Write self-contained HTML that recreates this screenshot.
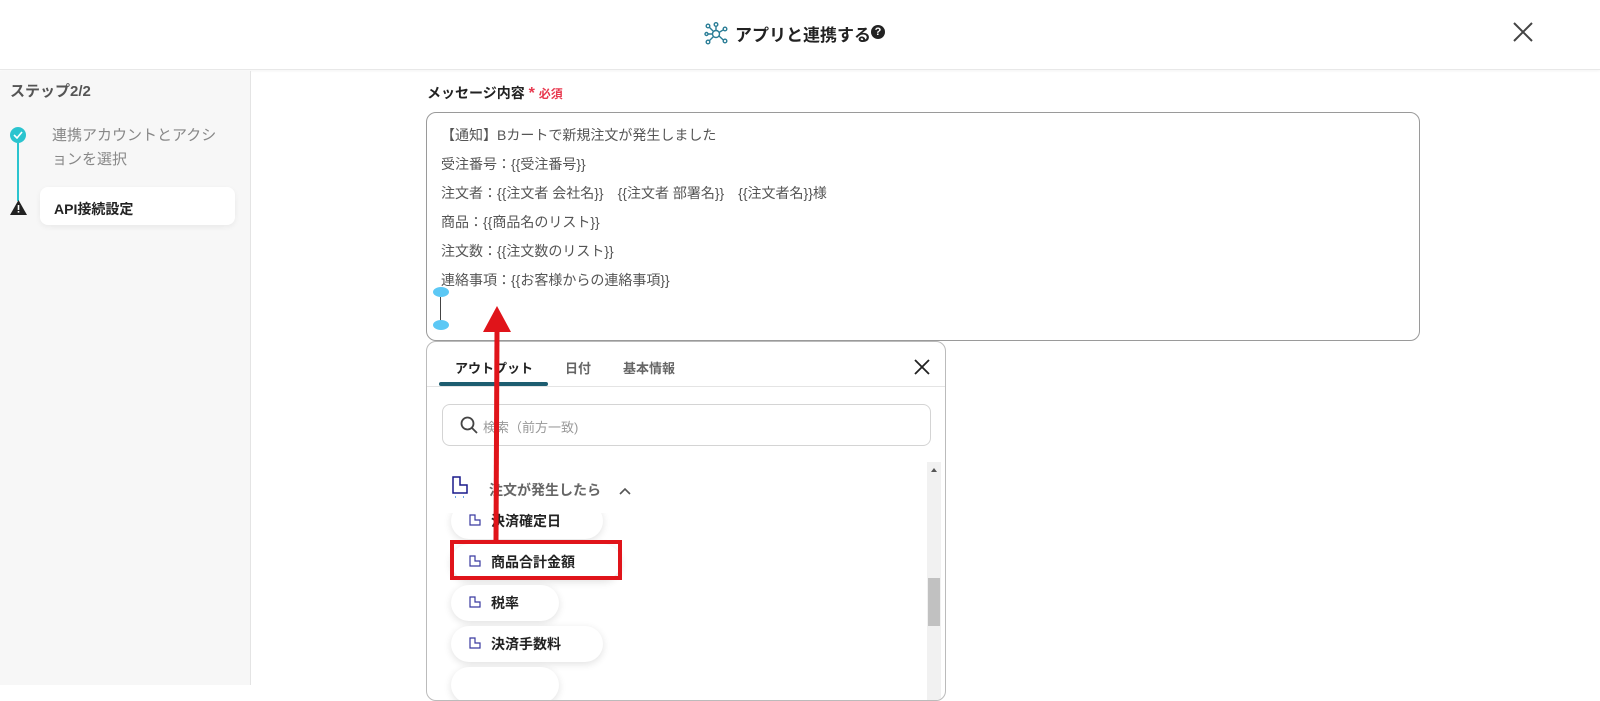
<!DOCTYPE html>
<html><head><meta charset="utf-8"><style>
*{margin:0;padding:0;box-sizing:border-box}
body{width:1600px;height:685px;overflow:hidden;background:#fff;font-family:"Liberation Sans","Noto Sans CJK JP",sans-serif;color:#333;position:relative}
.hdr{position:absolute;left:0;top:0;width:1600px;height:70px;background:#fff;border-bottom:1px solid #e8e8e8;box-shadow:0 1px 3px rgba(0,0,0,.05)}
.side{position:absolute;left:0;top:71px;width:251px;height:614px;background:#f7f7f7;border-right:1px solid #e4e4e4}
.abs{position:absolute}
.ta{position:absolute;left:426px;top:112px;width:994px;height:229px;border:1px solid #9a9a9a;border-radius:10px;background:#fff}
.ta div{position:absolute;left:14px;font-size:14px;color:#555}
.pop{position:absolute;left:426px;top:341px;width:520px;height:360px;border:1px solid #bbb;border-radius:10px;background:#fff;overflow:hidden}
.chip{position:absolute;height:36px;border-radius:18px;background:#fff;box-shadow:0 2px 8px rgba(0,0,0,.12);font-size:14px;font-weight:bold;color:#222;padding-left:40px;line-height:36px}
.ic{position:absolute;left:18px;top:11px;width:12px;height:14px}
</style></head><body>
<div class="hdr">
<svg class="abs" style="left:704px;top:22px" width="24" height="24" viewBox="0 0 24 24" fill="none" stroke="#2a7d96" stroke-width="1.4"><circle cx="12" cy="12" r="3.5"/><circle cx="4" cy="4" r="1.8"/><circle cx="12" cy="2.5" r="1.8"/><circle cx="21" cy="7" r="1.8"/><circle cx="21" cy="19" r="1.8"/><circle cx="4" cy="20" r="1.8"/><circle cx="2.5" cy="12" r="1.5"/><path d="M9.5 9.5L5.3 5.3M12 8.5V4.3M15 10.5L19.3 7.8M15 14L19.3 18M9.5 14.5L5.3 18.7M8.5 12H4"/></svg>
<div class="abs" style="left:735px;top:21px;font-size:17px;font-weight:bold;color:#222">アプリと連携する</div>
<div class="abs" style="left:871px;top:25px;width:14px;height:14px;border-radius:50%;background:#222;color:#fff;font-size:11px;font-weight:bold;text-align:center;line-height:14px">?</div>
<svg class="abs" style="left:1513px;top:22px" width="20" height="20" viewBox="0 0 20 20" stroke="#444" stroke-width="2"><path d="M1 1L19 19M19 1L1 19"/></svg>
</div>
<div class="side">
<div class="abs" style="left:10px;top:9px;font-size:15px;font-weight:bold;color:#555">ステップ2/2</div>
<div class="abs" style="left:10px;top:56px;width:16px;height:16px;border-radius:50%;background:#2bc4cf"></div>
<svg class="abs" style="left:13px;top:60px" width="10" height="8" viewBox="0 0 10 8" fill="none" stroke="#fff" stroke-width="1.6"><path d="M1 4L4 7L9 1"/></svg>
<div class="abs" style="left:17px;top:72px;width:2px;height:58px;background:#2bc4cf"></div>
<svg class="abs" style="left:10px;top:129px" width="17" height="15" viewBox="0 0 17 15"><path d="M8.5 0L17 15H0Z" fill="#222"/><rect x="7.7" y="5" width="1.6" height="5" fill="#fff"/><rect x="7.7" y="11" width="1.6" height="1.6" fill="#fff"/></svg>
<div class="abs" style="left:52px;top:53px;font-size:15px;color:#888;line-height:24px">連携アカウントとアクシ<br>ョンを選択</div>
<div class="abs" style="left:40px;top:116px;width:195px;height:38px;background:#fff;border-radius:8px;box-shadow:0 2px 6px rgba(0,0,0,.06);font-size:14px;font-weight:bold;color:#222;padding:12px 0 0 14px">API接続設定</div>
</div>
<div class="abs" style="left:427px;top:83px;font-size:14px;font-weight:bold;color:#222">メッセージ内容 <span style="color:#e8394f;font-size:16px">*</span> <span style="color:#e8394f;font-size:12px">必須</span></div>
<div class="ta">
<div style="top:12px">【通知】Bカートで新規注文が発生しました</div>
<div style="top:41px">受注番号：{{受注番号}}</div>
<div style="top:70px">注文者：{{注文者 会社名}}　{{注文者 部署名}}　{{注文者名}}様</div>
<div style="top:99px">商品：{{商品名のリスト}}</div>
<div style="top:128px">注文数：{{注文数のリスト}}</div>
<div style="top:157px">連絡事項：{{お客様からの連絡事項}}</div>
<div style="left:6px;top:174px;width:16px;height:10px;border-radius:50%;background:#5cc8f5"></div>
<div style="left:13px;top:184px;width:1px;height:24px;background:#444"></div>
<div style="left:6px;top:207px;width:16px;height:10px;border-radius:50%;background:#5cc8f5"></div>
</div>
<div class="pop">
<div class="abs" style="left:28px;top:16px;font-size:13px;font-weight:bold;color:#222">アウトプット</div>
<div class="abs" style="left:138px;top:16px;font-size:13px;font-weight:bold;color:#666">日付</div>
<div class="abs" style="left:196px;top:16px;font-size:13px;font-weight:bold;color:#666">基本情報</div>
<div class="abs" style="left:12px;top:40px;width:109px;height:4px;background:#1d5d70;border-radius:2px"></div>
<div class="abs" style="left:0;top:44px;width:518px;height:1px;background:#e4e4e4"></div>
<svg class="abs" style="left:487px;top:17px" width="16" height="16" viewBox="0 0 16 16" stroke="#222" stroke-width="1.8"><path d="M1 1L15 15M15 1L1 15"/></svg>
<div class="abs" style="left:15px;top:62px;width:489px;height:42px;border:1px solid #d4d4d4;border-radius:8px"></div>
<svg class="abs" style="left:33px;top:74px" width="18" height="18" viewBox="0 0 18 18" fill="none" stroke="#444" stroke-width="1.8"><circle cx="7.5" cy="7.5" r="6"/><path d="M12 12L17 17"/></svg>
<div class="abs" style="left:56px;top:75px;font-size:13px;color:#999">検索（前方一致)</div>
<div class="abs" style="left:500px;top:120px;width:14px;height:240px;background:#f1f1f1"></div>
<div class="abs" style="left:501px;top:236px;width:12px;height:48px;background:#c1c1c1"></div>
<div class="abs" style="left:504px;top:126px;width:0;height:0;border-left:3px solid transparent;border-right:3px solid transparent;border-bottom:4px solid #555"></div>
<div class="chip" style="left:24px;top:161px;width:152px">決済確定日<svg class="ic" viewBox="0 0 12 14" fill="none" stroke="#3a3aa0" stroke-width="1.2"><path d="M1 1H6V6H11V11H1Z"/></svg></div>
<div class="abs" style="left:0;top:118px;width:240px;height:53px;background:#fff"></div>
<svg class="abs" style="left:24px;top:134px" width="18" height="22" viewBox="0 0 18 22" fill="none" stroke="#1a1a8c" stroke-width="1.5"><path d="M2 1H9V9H16V17H2Z"/><path d="M4 21H5M12 21H13" stroke="#3a8ae0"/></svg>
<div class="abs" style="left:62px;top:138px;font-size:14px;font-weight:bold;color:#666">注文が発生したら</div>
<svg class="abs" style="left:192px;top:145px" width="12" height="8" viewBox="0 0 12 8" fill="none" stroke="#555" stroke-width="1.6"><path d="M1 7L6 2L11 7"/></svg>
<div class="chip" style="left:24px;top:202px;width:170px">商品合計金額<svg class="ic" viewBox="0 0 12 14" fill="none" stroke="#3a3aa0" stroke-width="1.2"><path d="M1 1H6V6H11V11H1Z"/></svg></div>
<div class="chip" style="left:24px;top:243px;width:108px">税率<svg class="ic" viewBox="0 0 12 14" fill="none" stroke="#3a3aa0" stroke-width="1.2"><path d="M1 1H6V6H11V11H1Z"/></svg></div>
<div class="chip" style="left:24px;top:284px;width:152px">決済手数料<svg class="ic" viewBox="0 0 12 14" fill="none" stroke="#3a3aa0" stroke-width="1.2"><path d="M1 1H6V6H11V11H1Z"/></svg></div>
<div class="chip" style="left:24px;top:325px;width:108px"></div>
</div>
<div class="abs" style="left:450px;top:540px;width:172px;height:40px;border:4px solid #e0141a"></div>
<svg class="abs" style="left:480px;top:300px" width="34" height="245" viewBox="0 0 34 245"><path d="M16 241L17 30" stroke="#e0141a" stroke-width="5"/><path d="M17 6L31 32H3Z" fill="#e0141a"/></svg>
</body></html>
